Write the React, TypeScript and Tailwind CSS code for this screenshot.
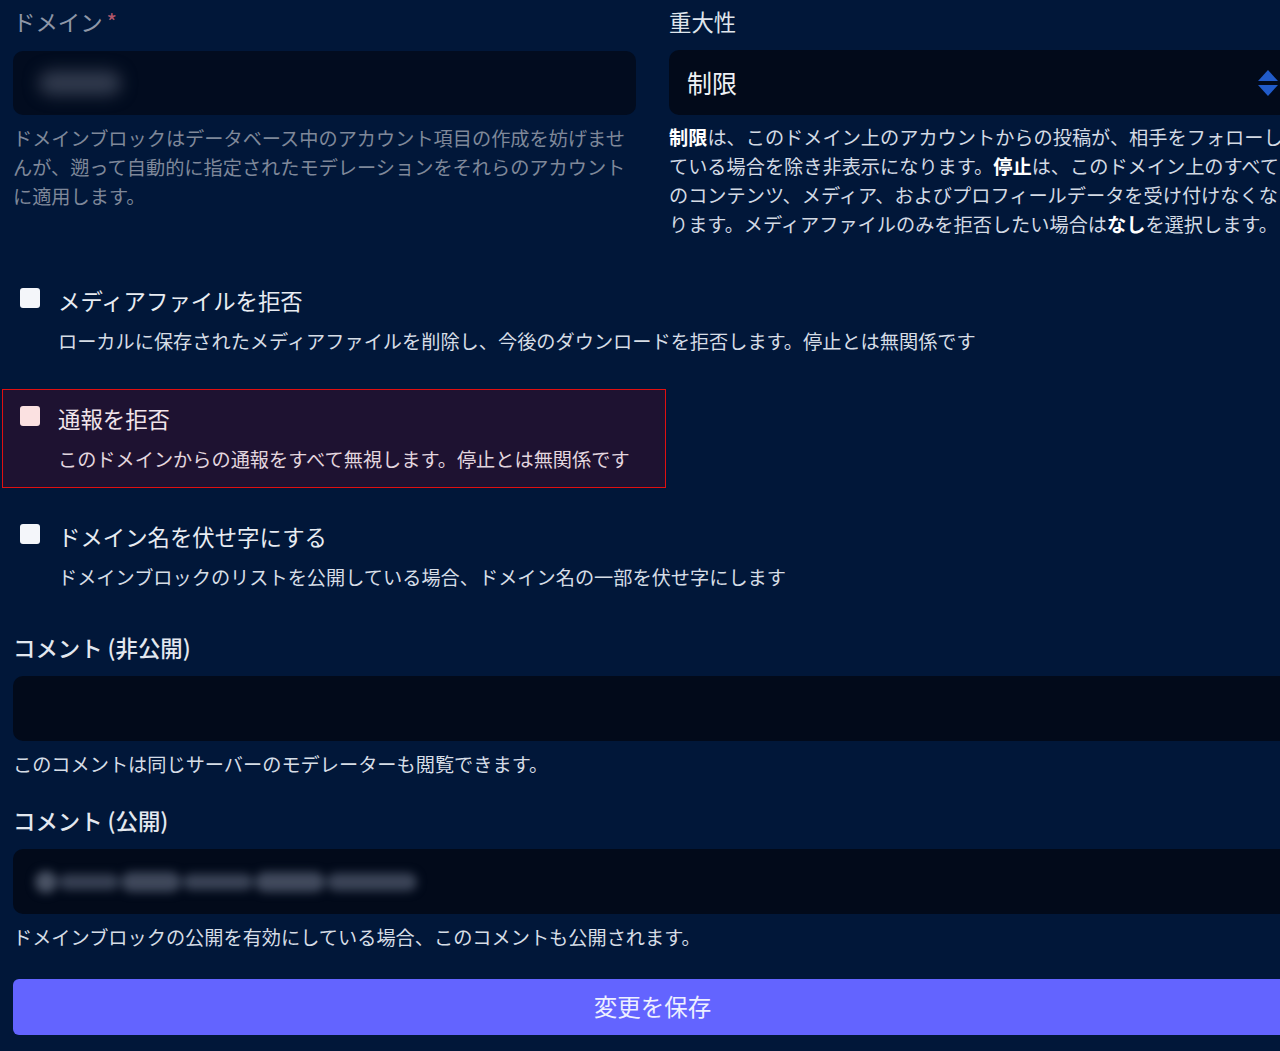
import React from "react";

const font = { fontFamily: '"Noto Sans CJK JP", "Noto Sans", sans-serif' };

function CheckRow({
  label,
  desc,
  highlight,
}: {
  label: string;
  desc: string;
  highlight?: boolean;
}) {
  return (
    <div
      className={
        "ml-[-11px] w-[664px] border pl-[17px] pt-[13px] pb-[13px] " +
        (highlight ? "border-[#e01010] bg-[#1e1231]" : "border-transparent")
      }
    >
      <div className="flex items-start gap-[18px]">
        <div
          className={
            "mt-[3px] h-[20px] w-[20px] shrink-0 rounded-[3px] " +
            (highlight ? "bg-[#fbe1e1]" : "bg-[#f4f6fa]")
          }
        />
        <div>
          <div
            className={
              "text-[22.4px] leading-[30px] " +
              (highlight ? "text-[#f1e4ea]" : "text-[#e8ecf2]")
            }
          >
            {label}
          </div>
          <div
            className={
              "mt-[12px] whitespace-nowrap text-[19.2px] leading-[29px] " +
              (highlight ? "text-[#e3d6df]" : "text-[#d6dde6]")
            }
          >
            {desc}
          </div>
        </div>
      </div>
    </div>
  );
}

export default function App() {
  return (
    <div
      className="h-[1051px] w-[1280px] overflow-hidden bg-[#011739]"
      style={font}
    >
      <div className="ml-[13px] w-[1279px] pt-[6px]">
        <div className="grid grid-cols-2 gap-[33px]">
          <div>
            <div className="text-[22.4px] leading-[30px] text-[#8f97a8]">
              ドメイン<span className="ml-[4px] text-[#b4576b]">*</span>
            </div>
            <div className="mt-[15px] flex h-[64px] items-center rounded-[10px] bg-[#020c1f] pl-[26px]">
              <div className="h-[24px] w-[82px] rounded-full bg-[#323b4e] blur-[8px]" />
            </div>
            <p className="mt-[9px] text-[19.2px] leading-[29px] text-[#7f8899]">
              ドメインブロックはデータベース中のアカウント項目の作成を妨げませんが、遡って自動的に指定されたモデレーションをそれらのアカウントに適用します。
            </p>
          </div>
          <div>
            <div className="text-[22.4px] leading-[30px] text-[#dfe5ec]">
              重大性
            </div>
            <div className="mt-[14px] flex h-[65px] items-center justify-between rounded-[10px] bg-[#020a1a] pl-[18px] pr-[14px]">
              <span className="text-[25px] text-[#eef1f5]">制限</span>
              <svg width="20" height="26" viewBox="0 0 20 26">
                <polygon points="10,0 20,11 0,11" fill="#215bc9" />
                <polygon points="0,15 20,15 10,26" fill="#215bc9" />
              </svg>
            </div>
            <p className="mt-[8px] text-[19.2px] leading-[29px] text-[#d3dae4]">
              <strong className="font-bold text-white">制限</strong>
              は、このドメイン上のアカウントからの投稿が、相手をフォローしている場合を除き非表示になります。
              <strong className="font-bold text-white">停止</strong>
              は、このドメイン上のすべてのコンテンツ、メディア、およびプロフィールデータを受け付けなくなります。メディアファイルのみを拒否したい場合は
              <strong className="font-bold text-white">なし</strong>
              を選択します。
            </p>
          </div>
        </div>

        <div className="mt-[32px] flex flex-col gap-[19px]">
          <CheckRow
            label="メディアファイルを拒否"
            desc="ローカルに保存されたメディアファイルを削除し、今後のダウンロードを拒否します。停止とは無関係です"
          />
          <CheckRow
            label="通報を拒否"
            desc="このドメインからの通報をすべて無視します。停止とは無関係です"
            highlight
          />
          <CheckRow
            label="ドメイン名を伏せ字にする"
            desc="ドメインブロックのリストを公開している場合、ドメイン名の一部を伏せ字にします"
          />
        </div>

        <div className="mt-[26px]">
          <div className="text-[22.4px] font-medium leading-[30px] text-[#e3e8ef]">
            コメント (非公開)
          </div>
          <div className="mt-[14px] h-[65px] rounded-[10px] bg-[#020a1a]" />
          <p className="mt-[9px] text-[19.2px] leading-[29px] text-[#d6dde6]">
            このコメントは同じサーバーのモデレーターも閲覧できます。
          </p>
        </div>

        <div className="mt-[26px]">
          <div className="text-[22.4px] font-medium leading-[30px] text-[#e3e8ef]">
            コメント (公開)
          </div>
          <div className="mt-[14px] flex h-[65px] items-center rounded-[10px] bg-[#020a1a] pl-[22px]">
            <div className="flex items-center gap-[2px] blur-[5px]">
              <div className="h-[22px] w-[22px] rounded-full bg-[#4a5365]" />
              <div className="h-[16px] w-[60px] rounded-full bg-[#363f52]" />
              <div className="h-[20px] w-[60px] rounded-full bg-[#3f485b]" />
              <div className="h-[16px] w-[70px] rounded-full bg-[#3a4356]" />
              <div className="h-[20px] w-[70px] rounded-full bg-[#414a5d]" />
              <div className="h-[18px] w-[90px] rounded-full bg-[#3b4457]" />
            </div>
          </div>
          <p className="mt-[9px] text-[19.2px] leading-[29px] text-[#d6dde6]">
            ドメインブロックの公開を有効にしている場合、このコメントも公開されます。
          </p>
        </div>

        <button className="mt-[27px] flex h-[56px] w-full items-center justify-center rounded-[6px] bg-[#6364ff] text-[23.5px] text-[#eef0ff]">
          変更を保存
        </button>
      </div>
    </div>
  );
}
